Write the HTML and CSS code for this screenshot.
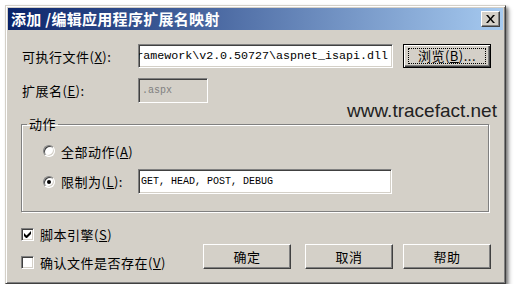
FILE: index.html
```html
<!DOCTYPE html>
<html lang="zh-CN">
<head>
<meta charset="utf-8">
<title>添加/编辑应用程序扩展名映射</title>
<link rel="stylesheet" href="styles.css">
</head>
<body>
<div class="window">
  <div class="titlebar">
    <span class="title">添加 /编辑应用程序扩展名映射</span>
    <span class="close"><svg width="9" height="8" viewBox="0 0 9 8"><path d="M0 0h2l2.5 3 2.5-3h2L5.5 4 9 8H7L4.5 5 2 8H0l3.5-4z" fill="#000"/></svg></span>
  </div>
  <div class="content">
    <div class="row r1">
      <span class="lbl">可执行文件(<u>X</u>):</span>
      <div class="edit path"><span>Framework\v2.0.50727\aspnet_isapi.dll</span></div>
      <span class="btn default"><span class="focus">浏览(<u>B</u>)...</span></span>
    </div>
    <div class="row r2">
      <span class="lbl">扩展名(<u>E</u>):</span>
      <div class="edit disabled">.aspx</div>
    </div>
    <fieldset class="group">
      <legend>动作</legend>
      <div class="opt o1"><span class="radio"></span><span>全部动作(<u>A</u>)</span></div>
      <div class="opt o2"><span class="radio on"></span><span class="olbl">限制为(<u>L</u>):</span><div class="edit verbs">GET, HEAD, POST, DEBUG</div></div>
    </fieldset>
    <div class="bottom">
      <div class="checks">
        <div class="chk"><span class="box"><svg width="7" height="7" viewBox="0 0 7 7"><path d="M0 2v3l2 2h1l4-4V0L2.5 4.5z" fill="#000"/></svg></span><span>脚本引擎(<u>S</u>)</span></div>
        <div class="chk"><span class="box"></span><span>确认文件是否存在(<u>V</u>)</span></div>
      </div>
      <div class="buttons">
        <span class="btn ok">确定</span>
        <span class="btn cancel">取消</span>
        <span class="btn">帮助</span>
      </div>
    </div>
  </div>
  <div class="watermark">www.tracefact.net</div>
</div>
</body>
</html>
```
FILE: styles.css
```css
* { box-sizing: border-box; }
body {
  margin: 0;
  background: #fff;
  font-family: "Noto Sans CJK SC", "Liberation Sans", sans-serif;
  font-size: 13px;
  letter-spacing: 0.5px;
  color: #000;
}
u { text-decoration: underline; text-underline-offset: 1px; }
.window {
  position: relative;
  margin: 5px 0 0 5px;
  width: 501px;
  height: 279px;
  background: #d4d0c8;
  border: 1px solid;
  border-color: #d4d0c8 #404040 #404040 #d4d0c8;
  box-shadow: inset 1px 1px #fff, inset -1px -1px #808080, 2px 2px 3px rgba(0,0,0,0.45), 4px 4px 4px rgba(0,0,0,0.15);
  padding: 2px;
  display: flex;
  flex-direction: column;
}
.titlebar {
  height: 22px;
  flex: none;
  background: linear-gradient(to right, #0a246a, #a6caf0);
  display: flex;
  align-items: center;
  justify-content: space-between;
  padding: 0 3px;
  color: #fff;
  font-weight: bold;
  font-size: 15px;
  letter-spacing: 0.3px;
  line-height: 22px;
}
.close {
  width: 19px;
  height: 16px;
  background: #d4d0c8;
  border: 1px solid;
  border-color: #fff #404040 #404040 #fff;
  box-shadow: inset -1px -1px #808080;
  display: flex;
  align-items: center;
  justify-content: center;
}
.content {
  flex: 1;
  padding: 14px 12px 0 14px;
}
.row { display: flex; align-items: center; height: 24px; }
.r2 { margin-top: 10px; height: 25px; }
.lbl { width: 116px; flex: none; }
.edit {
  height: 24px;
  background: #fff;
  border: 1px solid;
  border-color: #808080 #fff #fff #808080;
  box-shadow: inset 1px 1px #404040, inset -1px -1px #d4d0c8;
  font-family: "Liberation Mono", monospace;
  letter-spacing: 0;
  display: flex;
  align-items: center;
  white-space: nowrap;
  overflow: hidden;
}
.path {
  width: 255px;
  margin-right: 10px;
  justify-content: flex-end;
  padding: 0 4px 0 2px;
  font-size: 11.67px;
}
.disabled {
  width: 70px;
  height: 25px;
  background: #d4d0c8;
  color: #808080;
  padding-left: 3px;
  font-size: 10px;
}
.btn {
  width: 88px;
  height: 25px;
  flex: none;
  display: flex;
  align-items: center;
  justify-content: center;
  background: #d4d0c8;
  border: 1px solid;
  border-color: #fff #404040 #404040 #fff;
  box-shadow: inset -1px -1px #808080;
}
.btn.default {
  height: 24px;
  border: 1px solid #000;
  box-shadow: inset 1px 1px #fff, inset -1px -1px #404040, inset -2px -2px #808080;
}
.focus {
  border: 1px dotted #000;
  width: 78px;
  height: 16px;
  display: flex;
  align-items: center;
  justify-content: center;
  line-height: 14px;
}
.group {
  margin: 14px 0 0 -1px;
  width: 468px;
  height: 95px;
  padding: 0 5px;
  border: 1px solid #808080;
  box-shadow: inset 1px 1px #fff, 1px 1px #fff;
}
.group legend {
  padding: 0 2px;
  line-height: 14px;
}
.opt { display: flex; align-items: center; margin-left: 16px; }
.o1 { margin-top: 13px; height: 14px; }
.o2 { margin-top: 11px; height: 25px; }
.radio {
  width: 12px;
  height: 12px;
  border-radius: 50%;
  background: #fff;
  border: 1px solid;
  border-color: #808080 #fff #fff #808080;
  box-shadow: inset 1px 1px #404040, inset -1px -1px #d4d0c8;
  margin-right: 6px;
  flex: none;
  display: flex;
  align-items: center;
  justify-content: center;
}
.radio.on::after {
  content: "";
  width: 4px;
  height: 4px;
  border-radius: 50%;
  background: #000;
}
.olbl { width: 77px; flex: none; }
.verbs {
  width: 254px;
  height: 25px;
  padding-left: 2px;
  font-size: 10px;
}
.bottom {
  display: flex;
  justify-content: space-between;
  align-items: flex-end;
  margin-top: 15px;
}
.checks { display: flex; flex-direction: column; gap: 14px; margin-left: -1px; }
.chk { display: flex; align-items: center; height: 14px; }
.box {
  width: 13px;
  height: 13px;
  background: #fff;
  border: 1px solid;
  border-color: #808080 #fff #fff #808080;
  box-shadow: inset 1px 1px #404040, inset -1px -1px #d4d0c8;
  margin-right: 6px;
  display: flex;
  align-items: center;
  justify-content: center;
  flex: none;
}
.buttons { display: flex; }
.ok { margin-right: 14px; }
.cancel { margin-right: 10px; }
.watermark {
  position: absolute;
  left: 341px;
  top: 94px;
  font-family: "Liberation Sans", Arial, sans-serif;
  font-size: 19px;
  letter-spacing: 0;
  color: #222;
}
```
